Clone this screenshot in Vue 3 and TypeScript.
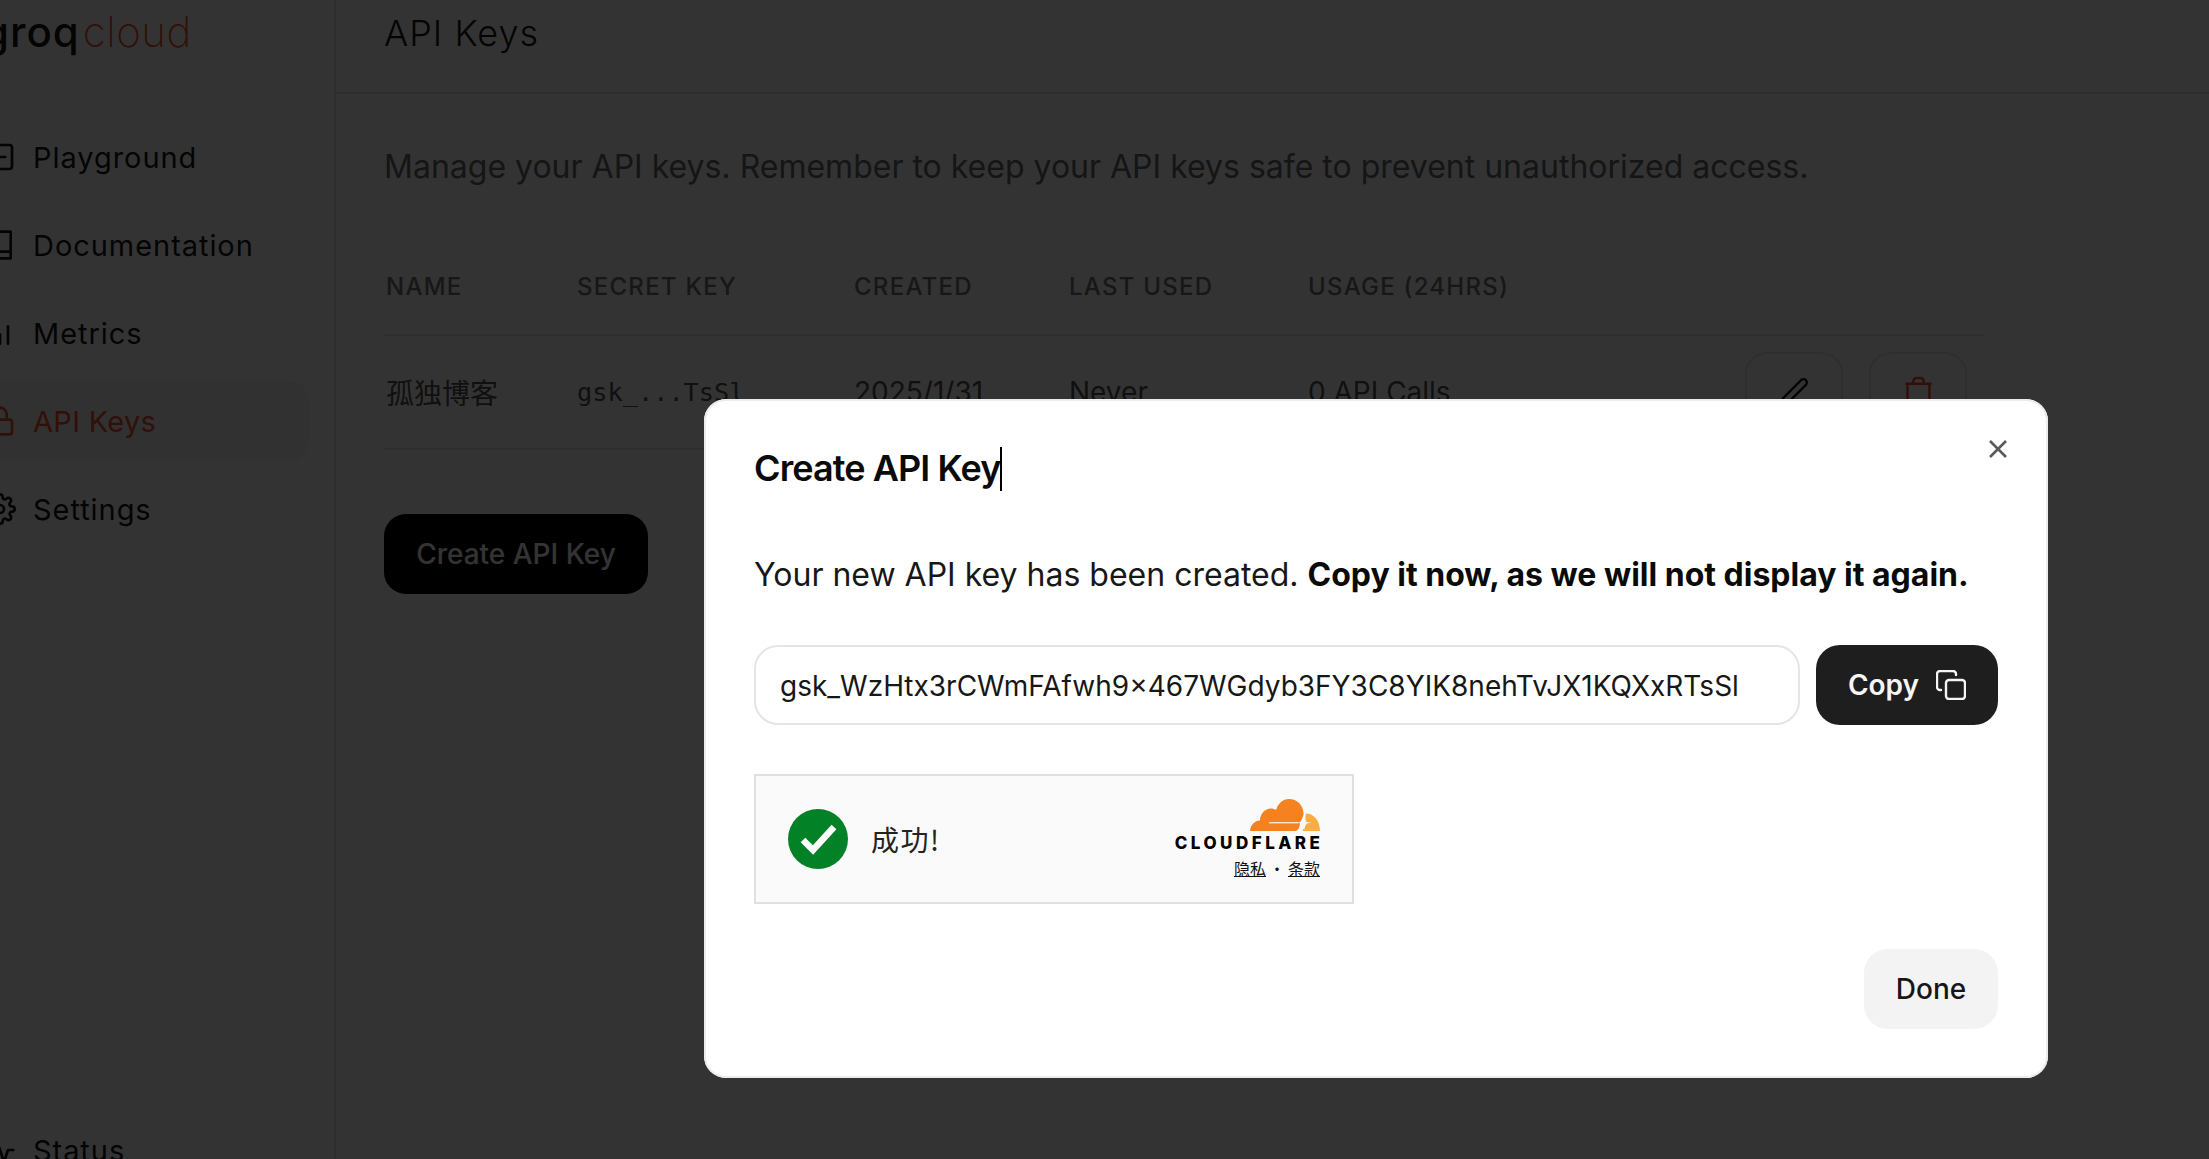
<script setup lang="ts">
interface NavItem {
  label: string
  active?: boolean
}

const nav: NavItem[] = [
  { label: 'Playground' },
  { label: 'Documentation' },
  { label: 'Metrics' },
  { label: 'API Keys', active: true },
  { label: 'Settings' },
]

const columns = ['Name', 'Secret Key', 'Created', 'Last Used', 'Usage (24hrs)']
</script>

<template>
  <div class="page">
    <aside class="sidebar">
      <div class="logo"><span class="groq">groq</span><span class="cloud">cloud</span></div>
      <nav class="nav">
        <a v-for="item in nav" :key="item.label" class="nav-item" :class="{ active: item.active }">
          <svg class="nav-icon" viewBox="0 0 24 24" fill="none" stroke="currentColor" stroke-width="2" stroke-linecap="round" stroke-linejoin="round">
            <template v-if="item.label === 'Playground'">
              <rect x="3" y="3" width="18" height="18" rx="2" />
              <path d="M11 12h5" />
            </template>
            <template v-else-if="item.label === 'Documentation'">
              <path d="M4 19.5A2.5 2.5 0 0 1 6.500 17H20V2H6.500A2.500 2.500 0 0 0 4 4.500z" />
              <path d="M6.500 17A2.500 2.500 0 0 0 4 19.500 2.500 2.500 0 0 0 6.500 22H20v-5" />
            </template>
            <template v-else-if="item.label === 'Metrics'">
              <path d="M18 20V7M12 20v-7M6 20v-3" />
            </template>
            <template v-else-if="item.label === 'API Keys'">
              <rect x="3" y="11" width="18" height="11" rx="2" />
              <path d="M7 11V7a5 5 0 0 1 10 0v4" />
            </template>
            <template v-else>
              <circle cx="12" cy="12" r="3" />
              <path d="M19.400 15a1.650 1.650 0 0 0 .33 1.820l.06.06a2 2 0 1 1-2.830 2.830l-.06-.06a1.650 1.650 0 0 0-2.820 1.170V21a2 2 0 1 1-4 0v-.09A1.650 1.650 0 0 0 7.170 19.800l-.06.06a2 2 0 1 1-2.830-2.830l.06-.06A1.650 1.650 0 0 0 3.170 14H3a2 2 0 1 1 0-4h.09A1.650 1.650 0 0 0 4.200 7.170l-.06-.06a2 2 0 1 1 2.830-2.830l.06.06A1.650 1.650 0 0 0 10 3.170V3a2 2 0 1 1 4 0v.09a1.650 1.650 0 0 0 2.820 1.170l.06-.06a2 2 0 1 1 2.830 2.830l-.06.06A1.650 1.650 0 0 0 20.830 10H21a2 2 0 1 1 0 4h-.09a1.650 1.650 0 0 0-1.510 1z" />
            </template>
          </svg>
          <span>{{ item.label }}</span>
        </a>
      </nav>
      <a class="nav-item status">
        <svg class="nav-icon" viewBox="0 0 24 24" fill="none" stroke="currentColor" stroke-width="2" stroke-linecap="round" stroke-linejoin="round">
          <path d="M22 12h-4l-3 9L9 3l-3 9H2" />
        </svg>
        <span>Status</span>
      </a>
    </aside>

    <main class="main">
      <header class="topbar"><h1>API Keys</h1></header>
      <div class="content">
        <p class="intro">Manage your API keys. Remember to keep your API keys safe to prevent unauthorized access.</p>
        <div class="table">
          <div class="row head">
            <span v-for="c in columns" :key="c">{{ c }}</span>
          </div>
          <div class="row body">
            <span class="name">孤独博客</span>
            <span class="mono">gsk_...TsSl</span>
            <span>2025/1/31</span>
            <span>Never</span>
            <span>0 API Calls</span>
            <div class="actions">
              <button class="icon-btn">
                <svg class="pen" viewBox="0 0 24 24" fill="none" stroke="#171717" stroke-width="1.500" stroke-linejoin="round">
                  <path d="M4 20l1-4L16.500 4.500a2 2 0 0 1 3 3L8 19z" />
                </svg>
              </button>
              <button class="icon-btn">
                <svg class="trash" viewBox="0 0 24 24" fill="none" stroke="#f55036" stroke-width="1.700">
                  <path d="M3 6h18M4.500 6v15h15V6M8.500 6V4a2 2 0 0 1 2-2h3a2 2 0 0 1 2 2v2" />
                </svg>
              </button>
            </div>
          </div>
        </div>
        <button class="create">Create API Key</button>
      </div>
    </main>

    <div class="overlay"></div>

    <section class="modal">
      <svg class="close" viewBox="0 0 20 20" fill="none" stroke="#5a5a5a" stroke-width="2.600">
        <path d="M2 2l16 16M18 2L2 18" />
      </svg>
      <h2 class="modal-title">Create API Key<span class="caret"></span></h2>
      <p class="modal-text">Your new API key has been created. <strong>Copy it now, as we will not display it again.</strong></p>
      <div class="key-row">
        <div class="key-input">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</div>
        <button class="copy">
          Copy
          <svg viewBox="0 0 30 30" fill="none" stroke="#f5f5f5" stroke-width="2.400" stroke-linecap="round" stroke-linejoin="round">
            <rect x="10" y="10" width="19" height="19" rx="3" />
            <path d="M5 20H4a3 3 0 0 1-3-3V4a3 3 0 0 1 3-3h13a3 3 0 0 1 3 3v1" />
          </svg>
        </button>
      </div>
      <div class="turnstile">
        <svg class="check" viewBox="0 0 60 60">
          <circle cx="30" cy="30" r="30" fill="#038127" />
          <path d="M15 31l10 10 21-23" fill="none" stroke="#fff" stroke-width="6.500" />
        </svg>
        <span class="success">成功!</span>
        <div class="cf">
          <svg class="cf-cloud" viewBox="0 0 70 32">
            <path d="M0 32C.5 26 5 21.500 10 21.500 10 15 15 9.500 21 9.500c2 0 3.500.5 5 1.500C28 4.500 33 0 39 0c8 0 14 6 14.500 14 .5 2-1.500 6-3.500 9.500C50 26 49 32 45 32z" fill="#f6821f" />
            <path d="M56 14.500C64 14.500 70 22 70 32H52.500c.5-2 2.500-5 4.500-8-2-2-2-6-1-9.500z" fill="#fbad41" />
            <path d="M19 23.700h29" stroke="#fde3c9" stroke-width="1.400" />
            <path d="M46 23.700l6-.7 2-6 2 6 6 .7-6 .8-2 6.500-2-6.500z" fill="#fafafa" />
          </svg>
          <span class="cf-name">CLOUDFLARE</span>
          <span class="cf-links"><u>隐私</u><i>•</i><u>条款</u></span>
        </div>
      </div>
      <div class="modal-foot"><button class="done">Done</button></div>
    </section>
  </div>
</template>

<style scoped>
.page {
  position: relative;
  display: flex;
  width: 2209px;
  height: 1159px;
  overflow: hidden;
  background: #fff;
  color: #171717;
  font-family: Inter, "Noto Sans CJK SC", sans-serif;
}

/* sidebar is cut off on the left in the capture, hence the negative margins */
.sidebar {
  flex: 0 0 336px;
  box-sizing: border-box;
  border-right: 2px solid #e5e5e5;
  height: 1159px;
}

.logo {
  display: flex;
  align-items: baseline;
  margin-left: -17px;
  height: 94px;
  font-size: 42px;
  line-height: 64px;
}

.groq {
  color: #171717;
  font-weight: 500;
  letter-spacing: 1px;
}

.cloud {
  margin-left: 3px;
  color: #f55036;
  font-weight: 200;
  letter-spacing: 0.500px;
}

.nav {
  display: flex;
  flex-direction: column;
  gap: 8px;
  margin-top: 23px;
}

.nav-item {
  display: flex;
  align-items: center;
  gap: 17px;
  box-sizing: border-box;
  height: 80px;
  width: 325px;
  margin-left: -16px;
  font-size: 29px;
  letter-spacing: 0.950px;
  border-radius: 20px;
  color: #171717;
}

.nav-item.active {
  color: #f55036;
  background: #f5f5f5;
  letter-spacing: 0.300px;
}

.nav-icon {
  flex: none;
  width: 32px;
  height: 32px;
}

.status {
  margin-top: 561px;
}

.main {
  flex: 1;
  min-width: 0;
}

.topbar {
  height: 94px;
  box-sizing: border-box;
  border-bottom: 2px solid #e5e5e5;
  padding-left: 48px;
}

.topbar h1 {
  margin: 0;
  font-weight: 300;
  font-size: 36px;
  letter-spacing: 1px;
  line-height: 66px;
}

.content {
  padding: 49px 0 0 48px;
}

.intro {
  margin: 0;
  font-size: 32px;
  line-height: 48px;
  color: #6b6b6b;
}

.table {
  width: 1601px;
  margin-top: 48px;
  color: #737373;
}

.row {
  display: grid;
  grid-template-columns: 191px 277px 215px 239px 1fr auto;
  align-items: center;
  box-sizing: border-box;
  border-bottom: 2px solid #e5e5e5;
  padding-left: 2px;
}

.head {
  height: 97px;
  padding-bottom: 1px;
  font-size: 24px;
  font-weight: 500;
  letter-spacing: 1.250px;
  text-transform: uppercase;
}

.body {
  height: 114px;
  font-size: 28px;
  color: #525252;
}

.name {
  font-family: "Noto Sans CJK SC", sans-serif;
}

.mono {
  font-family: "DejaVu Sans Mono", monospace;
  font-size: 25.300px;
}

.actions {
  display: flex;
  gap: 26px;
  padding-right: 18px;
}

.icon-btn {
  display: flex;
  align-items: center;
  justify-content: center;
  width: 98px;
  height: 80px;
  background: #fff;
  border: 2px solid #e5e5e5;
  border-radius: 22px;
  padding: 0;
}

.pen {
  width: 38px;
  height: 38px;
}

.trash {
  width: 35px;
  height: 35px;
}

.create {
  display: block;
  width: 264px;
  height: 80px;
  margin-top: 64px;
  border: 0;
  border-radius: 22px;
  background: #000;
  color: #fff;
  font-family: Inter, sans-serif;
  font-size: 28px;
  font-weight: 500;
}

.overlay {
  position: absolute;
  inset: 0;
  background: rgba(0, 0, 0, 0.8);
}

.modal {
  position: absolute;
  left: 704px;
  top: 399px;
  width: 1344px;
  height: 679px;
  box-sizing: border-box;
  padding: 47px 50px 0;
  background: #fff;
  border-radius: 22px;
  box-shadow: inset 0 0 0 2px #ececec;
}

.close {
  position: absolute;
  top: 40px;
  right: 40px;
  width: 20px;
  height: 20px;
}

.modal-title {
  margin: 0;
  font-size: 36px;
  font-weight: 600;
  line-height: 44px;
  letter-spacing: -0.900px;
  color: #0a0a0a;
}

.caret {
  display: inline-block;
  width: 2px;
  height: 44px;
  margin-left: -1px;
  background: #000;
  vertical-align: -10px;
}

.modal-text {
  margin: 60px 0 0;
  font-size: 32px;
  line-height: 48px;
  color: #171717;
}

.modal-text strong {
  font-weight: 700;
  color: #0a0a0a;
}

.key-row {
  display: flex;
  gap: 16px;
  margin-top: 46px;
  width: 1244px;
}

.key-input {
  flex: 1;
  box-sizing: border-box;
  height: 80px;
  padding-left: 24px;
  border: 2px solid #e5e5e5;
  border-radius: 24px;
  font-size: 28px;
  line-height: 78px;
  color: #171717;
}

.copy {
  display: flex;
  align-items: center;
  justify-content: center;
  gap: 17px;
  flex: 0 0 182px;
  height: 80px;
  padding: 0;
  border: 0;
  border-radius: 24px;
  background: #1e1e1e;
  color: #f5f5f5;
  font-family: Inter, sans-serif;
  font-size: 28px;
  font-weight: 600;
}

.copy svg {
  width: 30px;
  height: 30px;
}

.turnstile {
  display: flex;
  align-items: center;
  box-sizing: border-box;
  width: 600px;
  height: 130px;
  margin-top: 49px;
  padding: 0 32px;
  border: 2px solid #e0e0e0;
  background: #fafafa;
}

.check {
  width: 60px;
  height: 60px;
}

.success {
  margin-left: 23px;
  font-family: "Noto Sans CJK SC", sans-serif;
  font-size: 28px;
  letter-spacing: 1.500px;
  color: #232323;
}

.cf {
  display: flex;
  flex-direction: column;
  align-items: flex-end;
  margin-left: auto;
}

.cf-cloud {
  width: 70px;
  height: 32px;
}

.cf-name {
  margin-top: 4px;
  margin-right: -3.500px;
  font-weight: 800;
  font-size: 17px;
  line-height: 16px;
  letter-spacing: 3.500px;
  color: #000;
}

.cf-links {
  margin-top: 6px;
  font-family: "Noto Sans CJK SC", sans-serif;
  font-size: 16px;
  line-height: 22px;
  color: #111;
}

.cf-links i {
  margin: 0 3px;
  font-style: normal;
}

.modal-foot {
  display: flex;
  justify-content: flex-end;
  width: 1244px;
  margin-top: 45px;
}

.done {
  width: 134px;
  height: 80px;
  border: 0;
  border-radius: 24px;
  background: #f3f3f3;
  color: #171717;
  font-family: Inter, sans-serif;
  font-size: 28px;
  font-weight: 500;
}
</style>
<style>
html, body {
  margin: 0;
  overflow: hidden;
}
</style>
